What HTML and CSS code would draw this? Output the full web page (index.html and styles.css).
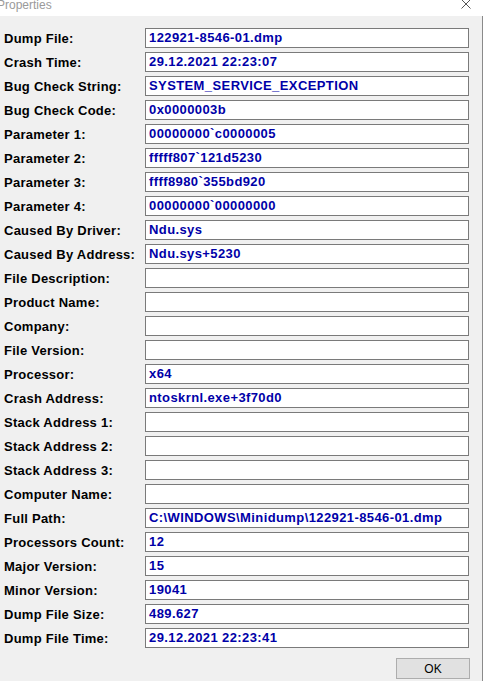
FILE: index.html
```html
<!DOCTYPE html>
<html lang="en">
<head>
  <meta charset="UTF-8">
  <title>Properties</title>
  <link rel="stylesheet" href="styles.css">
</head>
<body>

  <div class="window">
    <div class="titlebar">
      <span class="title">Properties</span>
      <svg class="close" width="12" height="10" viewBox="0 0 12 10">
        <path d="M1.5 0.5 L10.5 9.5 M10.5 0.5 L1.5 9.5" stroke="#555" stroke-width="1" fill="none"/>
      </svg>
    </div>

    <div class="content">
      <div class="fields">
        <label>Dump File:</label><div class="box">122921-8546-01.dmp</div>
        <label>Crash Time:</label><div class="box">29.12.2021 22:23:07</div>
        <label>Bug Check String:</label><div class="box">SYSTEM_SERVICE_EXCEPTION</div>
        <label>Bug Check Code:</label><div class="box">0x0000003b</div>
        <label>Parameter 1:</label><div class="box">00000000`c0000005</div>
        <label>Parameter 2:</label><div class="box">fffff807`121d5230</div>
        <label>Parameter 3:</label><div class="box">ffff8980`355bd920</div>
        <label>Parameter 4:</label><div class="box">00000000`00000000</div>
        <label>Caused By Driver:</label><div class="box">Ndu.sys</div>
        <label>Caused By Address:</label><div class="box">Ndu.sys+5230</div>
        <label>File Description:</label><div class="box"></div>
        <label>Product Name:</label><div class="box"></div>
        <label>Company:</label><div class="box"></div>
        <label>File Version:</label><div class="box"></div>
        <label>Processor:</label><div class="box">x64</div>
        <label>Crash Address:</label><div class="box">ntoskrnl.exe+3f70d0</div>
        <label>Stack Address 1:</label><div class="box"></div>
        <label>Stack Address 2:</label><div class="box"></div>
        <label>Stack Address 3:</label><div class="box"></div>
        <label>Computer Name:</label><div class="box"></div>
        <label>Full Path:</label><div class="box">C:\WINDOWS\Minidump\122921-8546-01.dmp</div>
        <label>Processors Count:</label><div class="box">12</div>
        <label>Major Version:</label><div class="box">15</div>
        <label>Minor Version:</label><div class="box">19041</div>
        <label>Dump File Size:</label><div class="box">489.627</div>
        <label>Dump File Time:</label><div class="box">29.12.2021 22:23:41</div>
      </div>

      <div class="buttons">
        <button class="ok">OK</button>
      </div>
    </div>
  </div>

</body>
</html>
```

FILE: styles.css
```css
* { box-sizing: border-box; margin: 0; padding: 0; }
body {
  background: #f0f0f0;
  font-family: "Liberation Sans", Arial, sans-serif;
  width: 483px;
  height: 681px;
  overflow: hidden;
}
.window {
  height: 681px;
  display: flex;
  flex-direction: column;
}
.titlebar {
  height: 16px;
  background: #fff;
  display: flex;
  justify-content: space-between;
  align-items: flex-start;
  overflow: hidden;
}
.title {
  font-size: 12px;
  color: #9a9a9a;
  margin-left: -3px;
  margin-top: -2px;
}
.close { margin: -1px 11px 0 0; }
.content {
  flex: 1;
  border-right: 1px solid #8a8a8a;
  padding: 12px 13px 0 4px;
}
.fields {
  display: grid;
  grid-template-columns: 141px 324px;
  grid-auto-rows: 20px;
  row-gap: 4px;
  align-items: center;
}
.fields label {
  font-size: 13px;
  font-weight: bold;
  letter-spacing: 0.25px;
  color: #000;
  white-space: nowrap;
}
.box {
  height: 20px;
  background: #fff;
  border: 1px solid #7a7a7a;
  padding: 0 3px;
  font-size: 13px;
  font-weight: bold;
  letter-spacing: 0.4px;
  color: #0000a8;
  line-height: 18px;
  white-space: nowrap;
  overflow: hidden;
}
.buttons {
  display: flex;
  justify-content: flex-end;
  padding-top: 10px;
}
.ok {
  width: 74px;
  height: 21px;
  margin-right: -1px;
  background: #e1e1e1;
  border: 1px solid #adadad;
  font-family: "Liberation Sans", Arial, sans-serif;
  font-size: 12px;
  color: #000;
}
```
